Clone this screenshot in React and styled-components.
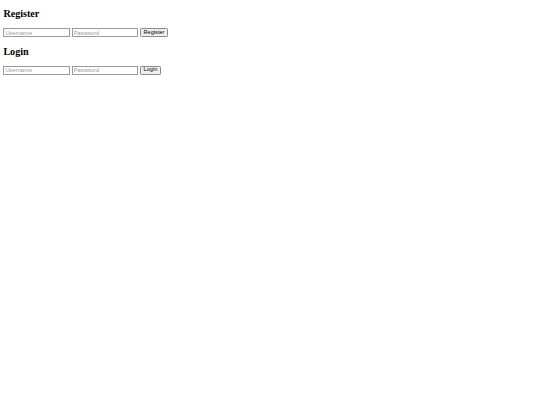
import React from "react";
import styled, { createGlobalStyle } from "styled-components";

const Global = createGlobalStyle`
  html, body { background: #fff; }
  body {
    margin: 0 3.4px 3.4px;
    padding: 0;
    font-family: "Liberation Serif", "Times New Roman", serif;
    color: #000;
  }
`;

const Heading = styled.h2`
  font-family: "Liberation Serif", "Times New Roman", serif;
  font-size: 10.1px;
  font-weight: bold;
  line-height: 11.6px;
  margin: 8.4px 0;
`;

const Row = styled.div`
  display: flex;
  align-items: center;
  gap: 1.8px;
  height: 9px;
`;

const Field = styled.input`
  box-sizing: border-box;
  width: 66.5px;
  height: 9px;
  padding: 0 1px;
  margin: 0;
  border: 0.6px solid #9a9a9a;
  border-radius: 0;
  font-family: "Liberation Sans", Arial, sans-serif;
  font-size: 5.8px;
  color: #000;
  background: #fff;
  outline: none;
  &::placeholder { color: #9a9a9a; }
`;

const Button = styled.button`
  box-sizing: border-box;
  height: 9px;
  padding: 0 2.6px;
  margin: 0;
  border: 0.6px solid #8a8a8a;
  border-radius: 1.2px;
  background: #efefef;
  font-family: "Liberation Sans", Arial, sans-serif;
  font-size: 5.6px;
  line-height: 1;
  color: #000;
`;

function AuthForm({ title, action }) {
  return (
    <section>
      <Heading>{title}</Heading>
      <Row>
        <Field type="text" placeholder="Username" />
        <Field type="password" placeholder="Password" />
        <Button type="button">{action}</Button>
      </Row>
    </section>
  );
}

export default function App() {
  return (
    <>
      <Global />
      <AuthForm title="Register" action="Register" />
      <AuthForm title="Login" action="Login" />
    </>
  );
}
